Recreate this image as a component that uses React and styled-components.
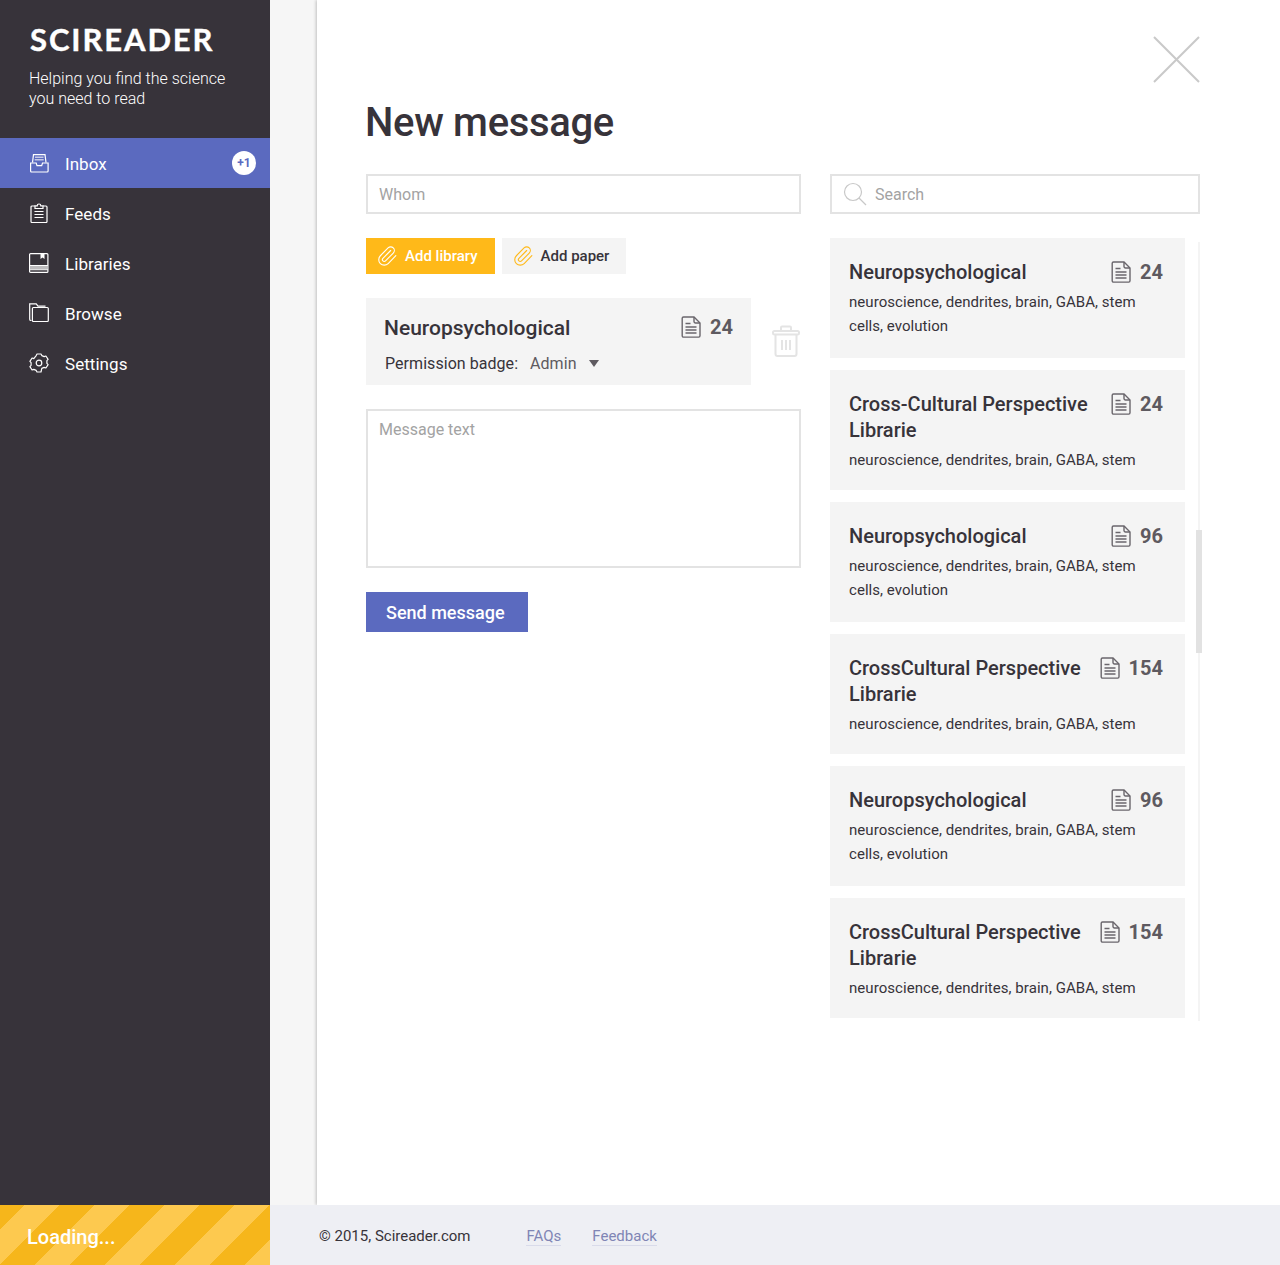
import React from 'react'
import styled, { createGlobalStyle } from 'styled-components'
import { Paperclip } from 'lucide-react'

const Global = createGlobalStyle`
  html, body { margin: 0; padding: 0; background: #fff; }
  body { font-family: Roboto, "Liberation Sans", sans-serif; color: #37333a; }
  * { box-sizing: border-box; }
  input::placeholder, textarea::placeholder { color: #a3a3a3; opacity: 1; }
`

const Page = styled.div`
  display: grid;
  grid-template-columns: 270px 1fr;
  grid-template-rows: 1205px 60px;
  width: 1280px;
  height: 1265px;
  overflow: hidden;
`

const Sidebar = styled.aside`
  background: #37333a;
  color: #fff;
`
const Brand = styled.div`
  height: 138px;
  padding: 21px 0 0 29px;
`
const Logo = styled.div`
  font-family: Lato, sans-serif;
  font-weight: 700;
  font-size: 31px;
  line-height: 37px;
  letter-spacing: 1.9px;
  margin: 0 0 11px 1px;
  -webkit-text-stroke: 0.4px #fff;
`
const Tagline = styled.p`
  margin: 0;
  font-weight: 300;
  font-size: 16px;
  line-height: 20px;
`
const NavItem = styled.a`
  display: flex;
  align-items: center;
  height: 50px;
  padding: 0 14px 0 29px;
  font-size: 17px;
  color: #fff;
  background: ${p => (p.$active ? '#5b6abf' : 'transparent')};
  svg { width: 20px; height: 20px; margin-right: 16px; flex: none; }
`
const NavLabel = styled.span`
  padding-top: 2px;
  letter-spacing: 0.05px;
`
const Badge = styled.span`
  margin-left: auto;
  width: 24px;
  height: 24px;
  border-radius: 50%;
  background: #fff;
  color: #5b6abf;
  font-size: 12px;
  font-weight: 700;
  line-height: 24px;
  text-align: center;
`

const Gutter = styled.div`
  background: #f6f6f6;
  padding-left: 47px;
  overflow: hidden;
`
const Main = styled.main`
  height: 100%;
  background: #fff;
  box-shadow: -1px 0 3px rgba(0, 0, 0, 0.22);
  padding: 36px 80px 0 49px;
`
const TopBar = styled.div`
  display: flex;
  justify-content: flex-end;
  height: 47px;
`
const CloseIcon = styled.svg`
  width: 47px;
  height: 47px;
  stroke: #c9c9c9;
  stroke-width: 2;
`
const Title = styled.h1`
  margin: 16px 0 28px -1px;
  font-size: 40px;
  line-height: 47px;
  font-weight: 500;
  letter-spacing: -0.33px;
`
const Columns = styled.div`
  display: grid;
  grid-template-columns: 435px 370px;
  column-gap: 29px;
`
const Column = styled.div`
  display: flex;
  flex-direction: column;
  align-items: flex-start;
`
const FieldBox = styled.label`
  display: flex;
  align-items: center;
  width: 100%;
  height: 40px;
  border: 2px solid #e3e3e3;
  margin-bottom: 24px;
  padding: 0 11px;
  svg { width: 24px; height: 24px; margin-right: 8px; }
`
const Field = styled.input`
  flex: 1;
  border: 0;
  outline: 0;
  padding: 0;
  font: 400 16px Roboto, sans-serif;
`
const Attachments = styled.div`
  display: flex;
  gap: 7px;
  margin-bottom: 24px;
`
const AttachButton = styled.button`
  display: flex;
  align-items: center;
  height: 36px;
  border: 0;
  padding: 0 17px 0 10px;
  font: 500 15px Roboto, sans-serif;
  background: ${p => (p.$primary ? '#ffb919' : '#f4f4f4')};
  color: ${p => (p.$primary ? '#fff' : '#37333a')};
  svg {
    width: 22px;
    height: 22px;
    margin-right: 7px;
    color: ${p => (p.$primary ? '#fff' : '#ffb919')};
  }
`
const AttachedRow = styled.div`
  display: flex;
  width: 100%;
  margin-bottom: 24px;
`
const AttachedCard = styled.div`
  width: 385px;
  height: 87px;
  background: #f4f4f4;
  padding: 17px 18px 0;
`
const TrashButton = styled.div`
  margin: 27px 0 0 21px;
  svg { display: block; width: 28px; height: 32px; stroke: #e4e4e4; }
`
const CardHead = styled.div`
  display: flex;
  justify-content: space-between;
  align-items: flex-start;
`
const CardTitle = styled.h3`
  margin: 0;
  font-size: ${p => p.$size}px;
  line-height: 26px;
  font-weight: 500;
  flex: 1;
`
const Count = styled.div`
  display: flex;
  align-items: center;
  height: ${p => p.$height}px;
  font-size: 20px;
  font-weight: 700;
  color: #5e5a60;
  svg { width: 20px; height: 22px; margin-right: 9px; }
`
const PermissionRow = styled.div`
  display: flex;
  align-items: center;
  margin: 13px 0 0 1px;
  font-size: 16px;
  letter-spacing: 0.05px;
  color: #37333a;
`
const PermissionValue = styled.span`
  margin-left: 12px;
  color: #5e5a60;
`
const Caret = styled.i`
  margin-left: 12px;
  border-left: 5px solid transparent;
  border-right: 5px solid transparent;
  border-top: 7px solid #5e5a60;
`
const MessageBox = styled.textarea`
  display: block;
  width: 100%;
  height: 159px;
  border: 2px solid #e3e3e3;
  outline: 0;
  padding: 9px 11px;
  margin-bottom: 24px;
  resize: none;
  font: 400 16px Roboto, sans-serif;
`
const SendButton = styled.button`
  width: 162px;
  height: 40px;
  border: 0;
  padding: 0 0 0 20px;
  text-align: left;
  background: #5b6abf;
  color: #fff;
  font: 500 18px Roboto, sans-serif;
`
const ListArea = styled.div`
  display: flex;
  align-items: flex-start;
`
const List = styled.div`
  width: 355px;
  display: flex;
  flex-direction: column;
  gap: 12px;
`
const LibraryCard = styled.article`
  height: 120px;
  background: #f4f4f4;
  padding: 21px 22px 0 19px;
`
const Tags = styled.p`
  margin: 5px 0 0;
  font-size: 15px;
  line-height: 24px;
  letter-spacing: 0.05px;
  color: #37333a;
`
const Track = styled.div`
  position: relative;
  width: 2px;
  height: 779px;
  margin: 4px 0 0 13px;
  background: #f4f4f4;
`
const Thumb = styled.div`
  position: absolute;
  left: -2px;
  top: 288px;
  width: 6px;
  height: 123px;
  background: #e2e2e2;
`

const LoadingBar = styled.div`
  display: flex;
  align-items: center;
  padding: 3px 0 0 27px;
  color: #fff;
  font-size: 20px;
  font-weight: 500;
  background: repeating-linear-gradient(
    135deg,
    #f6b61b 0 17px,
    #fdc94f 17px 41.75px,
    #f6b61b 41.75px 49.5px
  );
`
const Footer = styled.footer`
  display: flex;
  align-items: center;
  padding: 2px 0 0 49px;
  background: #eeeff4;
  font-size: 15px;
  color: #37333a;
`
const FooterLink = styled.a`
  margin: 2px 0 0 ${p => p.$gap}px;
  color: #8085b5;
  border-bottom: 1px solid #d9dbea;
  line-height: 17px;
`

const InboxIcon = () => (
  <svg viewBox="0 0 20 20" fill="none" stroke="#fff" strokeWidth="1.2">
    <path d="M3.500 9.500 4.500 1.600h11.500l1 7.900" />
    <path d="M1.600 10V18a1 1 0 0 0 1 1h15.500a1 1 0 0 0 1-1V10h-5.600l-.8 2.600H8l-.8-2.600z" />
    <path d="M6 4.200h8.500M5.700 6.700h9" stroke="#c5c9e8" strokeWidth="1.400" />
  </svg>
)
const FeedsIcon = () => (
  <svg viewBox="0 0 20 20" fill="none" stroke="#fff" strokeWidth="1.2">
    <path d="M6 3H3a1 1 0 0 0-1 1v14.500a1 1 0 0 0 1 1h14a1 1 0 0 0 1-1V4a1 1 0 0 0-1-1h-3" />
    <path d="M6 5.500V2.800h2.200a1.800 1.800 0 0 1 3.600 0H14v2.700z" />
    <path d="M5.500 8.500h9M5.500 11.500h9M5.500 14.500h9" />
  </svg>
)
const LibrariesIcon = () => (
  <svg viewBox="0 0 20 20" fill="none" stroke="#fff" strokeWidth="1.2">
    <rect x="0.600" y="0.600" width="18.300" height="18.800" rx="1" />
    <path d="M0.600 12.500h18.300M0.600 16.700h18.300" />
    <path d="M1 13h17.500v3.500H1z" fill="#bdbcbe" stroke="none" />
    <path d="M11.500 1h4v5l-2-1.500-2 1.500z" fill="#fff" stroke="none" />
  </svg>
)
const BrowseIcon = () => (
  <svg viewBox="0 0 20 20" fill="none" stroke="#fff" strokeWidth="1.2">
    <path d="M2.500 17.500H2a1.300 1.300 0 0 1-1.300-1.300V.8h6.500l1.800 2.400h7.500" />
    <rect x="3.400" y="4.500" width="15.900" height="14" rx="1" />
  </svg>
)
const SettingsIcon = () => (
  <svg viewBox="0 0 20 20" fill="none" stroke="#fff" strokeWidth="1.2" strokeLinejoin="round">
    <path d="M7.200 2.600 8 1h4l.8 1.600 2.400 1 1.700-.6 2.200 3.400-1.200 1.300v2.600l1.200 1.300-2.200 3.400-1.700-.6-2.400 1L12 19H8l-.8-1.600-2.400-1-1.700.6-2.200-3.400 1.200-1.300V9.700L.9 8.400l2.200-3.400 1.700.6z" />
    <circle cx="10" cy="10" r="2.800" />
  </svg>
)
const DocIcon = () => (
  <svg viewBox="0 0 20 22" fill="none" stroke="#6a666c" strokeWidth="1.400">
    <path d="M2.500 1H13l6 6v12.800a1.300 1.300 0 0 1-1.300 1.300H2.500a1.300 1.300 0 0 1-1.300-1.300V2.300A1.300 1.300 0 0 1 2.500 1z" />
    <path d="M13 1v4.500a1.500 1.500 0 0 0 1.500 1.500H19" />
    <path d="M4.500 7.500h5M4.500 11h11M4.500 14h11M4.500 17h11" />
  </svg>
)
const TrashIcon = () => (
  <svg viewBox="0 0 28 32" fill="none" strokeWidth="2">
    <rect x="1" y="6" width="26" height="3.500" rx="1.500" />
    <path d="M9 6V2.500a1 1 0 0 1 1-1h8a1 1 0 0 1 1 1V6" />
    <path d="M3.500 9.500V29a2 2 0 0 0 2 2h17a2 2 0 0 0 2-2V9.500" />
    <path d="M10 15v10M14 15v10M18 15v10" />
  </svg>
)
const SearchIcon = () => (
  <svg viewBox="0 0 24 24" fill="none" stroke="#c8c8c8" strokeWidth="1.2">
    <circle cx="10" cy="10" r="8.500" />
    <path d="M16 16l7 7" />
  </svg>
)

const nav = [
  { label: 'Inbox', icon: <InboxIcon />, active: true, badge: '+1' },
  { label: 'Feeds', icon: <FeedsIcon /> },
  { label: 'Libraries', icon: <LibrariesIcon /> },
  { label: 'Browse', icon: <BrowseIcon /> },
  { label: 'Settings', icon: <SettingsIcon /> },
]

const shortTags = 'neuroscience, dendrites, brain, GABA, stem'
const longTags = 'neuroscience, dendrites, brain, GABA, stem cells, evolution'

const libraries = [
  { title: 'Neuropsychological', count: 24, tags: longTags },
  { title: 'Cross-Cultural Perspective Librarie', count: 24, tags: shortTags },
  { title: 'Neuropsychological', count: 96, tags: longTags },
  { title: 'CrossCultural Perspective Librarie', count: 154, tags: shortTags },
  { title: 'Neuropsychological', count: 96, tags: longTags },
  { title: 'CrossCultural Perspective Librarie', count: 154, tags: shortTags },
]

const App = () => {
  return (
    <Page>
      <Global />
      <Sidebar>
        <Brand>
          <Logo>SCIREADER</Logo>
          <Tagline>Helping you find the science<br />you need to read</Tagline>
        </Brand>
        {nav.map(item => (
          <NavItem key={item.label} $active={item.active}>
            {item.icon}
            <NavLabel>{item.label}</NavLabel>
            {item.badge && <Badge>{item.badge}</Badge>}
          </NavItem>
        ))}
      </Sidebar>

      <Gutter>
        <Main>
          <TopBar>
            <CloseIcon viewBox="0 0 47 47"><path d="M1 1l45 45M46 1L1 46" /></CloseIcon>
          </TopBar>
          <Title>New message</Title>
          <Columns>
            <Column>
              <FieldBox><Field placeholder="Whom" /></FieldBox>
              <Attachments>
                <AttachButton $primary><Paperclip strokeWidth={1.2} />Add library</AttachButton>
                <AttachButton><Paperclip strokeWidth={1.2} />Add paper</AttachButton>
              </Attachments>
              <AttachedRow>
                <AttachedCard>
                  <CardHead>
                    <CardTitle $size={21}>Neuropsychological</CardTitle>
                    <Count $height={24}><DocIcon />24</Count>
                  </CardHead>
                  <PermissionRow>
                    Permission badge:
                    <PermissionValue>Admin</PermissionValue>
                    <Caret />
                  </PermissionRow>
                </AttachedCard>
                <TrashButton><TrashIcon /></TrashButton>
              </AttachedRow>
              <MessageBox placeholder="Message text" />
              <SendButton>Send message</SendButton>
            </Column>
            <Column>
              <FieldBox><SearchIcon /><Field placeholder="Search" /></FieldBox>
              <ListArea>
                <List>
                  {libraries.map((lib, i) => (
                    <LibraryCard key={i}>
                      <CardHead>
                        <CardTitle $size={20}>{lib.title}</CardTitle>
                        <Count $height={26}><DocIcon />{lib.count}</Count>
                      </CardHead>
                      <Tags>{lib.tags}</Tags>
                    </LibraryCard>
                  ))}
                </List>
                <Track><Thumb /></Track>
              </ListArea>
            </Column>
          </Columns>
        </Main>
      </Gutter>

      <LoadingBar>Loading...</LoadingBar>
      <Footer>
        © 2015, Scireader.com
        <FooterLink $gap={56}>FAQs</FooterLink>
        <FooterLink $gap={31}>Feedback</FooterLink>
      </Footer>
    </Page>
  )
}

export default App
